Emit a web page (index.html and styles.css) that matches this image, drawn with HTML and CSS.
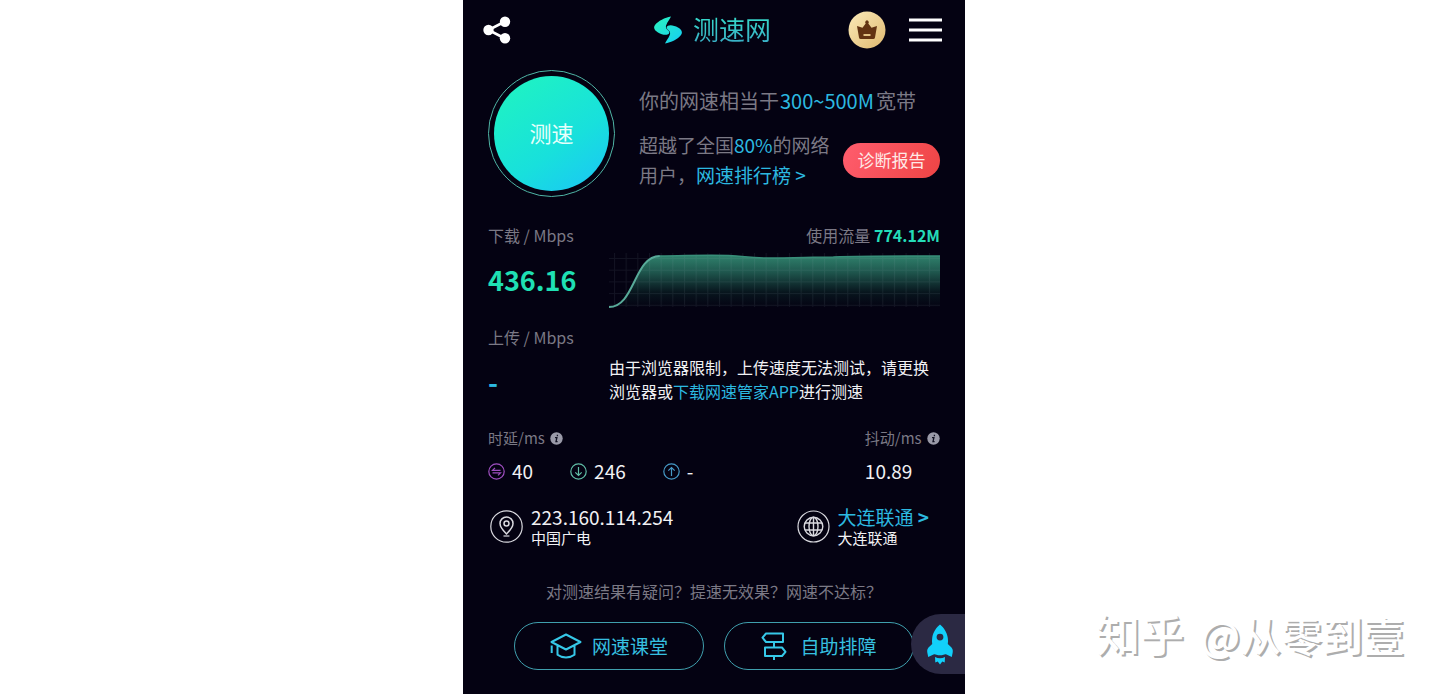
FILE: index.html
```html
<!DOCTYPE html>
<html lang="zh-CN">
<head>
<meta charset="utf-8">
<meta name="viewport" content="width=device-width, initial-scale=1">
<title>测速网</title>
<link rel="stylesheet" href="styles.css">
</head>
<body>
<main class="panel">
  <header class="topbar">
    <button class="icon-button" type="button" aria-label="分享">
      <svg width="28" height="28" viewBox="0 0 28 28" fill="#fff"><path d="M22 5.500 5.500 14 22 22.500" fill="none" stroke="#fff" stroke-width="2.600"/><circle cx="5.500" cy="14" r="5.200"/><circle cx="22" cy="5.700" r="5.200"/><circle cx="22" cy="22.300" r="5.200"/></svg>
    </button>
    <h1 class="brand">
      <svg width="28" height="28" viewBox="0 0 28 28" aria-hidden="true">
        <defs><linearGradient id="logo" x1="0" y1="0" x2="1" y2="1"><stop offset="0" stop-color="#2cf5bd"/><stop offset="1" stop-color="#14cdf5"/></linearGradient></defs>
        <path fill="url(#logo)" d="M17 .500C11 1.500 4 5 1 9C-1 12 .500 14.500 4 16.500C7.500 18.500 11.500 19.500 14 18.300C16 17.200 15.500 15.500 14 14.200C11.500 12 11.500 10.500 12.500 8.500C13.500 6 15.500 3.500 17 .500ZM11 27.500C17 26.500 24 23 27 19C29 16 27.500 13.500 24 11.500C20.500 9.500 16.500 8.500 14 9.700C12 10.800 12.500 12.500 14 13.800C16.500 16 16.500 17.500 15.500 19.500C14.500 22 12.500 24.500 11 27.500Z"/>
      </svg>
      <span class="brand-name">测速网</span>
    </h1>
    <div class="actions">
      <button class="icon-button" type="button" aria-label="会员">
        <svg width="38" height="38" viewBox="0 0 38 38">
          <defs><linearGradient id="gold" x1="0" y1="0" x2="1" y2="1"><stop offset="0" stop-color="#fbeab9"/><stop offset="1" stop-color="#dfb970"/></linearGradient></defs>
          <circle cx="19" cy="19" r="18.500" fill="url(#gold)"/>
          <path fill="#623313" d="M9 15l5.500 1.800 3.200-4.300a1.800 1.800 0 1 1 2.600 0l3.200 4.300L29 15l-2 11.500q-.300 1.500-1.700 1.500H12.700q-1.400 0-1.700-1.500Z"/>
          <path d="M15.500 24h7" stroke="#f0d291" stroke-width="1.800"/>
        </svg>
      </button>
      <button class="icon-button" type="button" aria-label="菜单">
        <svg width="33" height="24" viewBox="0 0 33 24"><path d="M0 2h33M0 12h33M0 22h33" stroke="#fff" stroke-width="3"/></svg>
      </button>
    </div>
  </header>

  <section class="hero">
    <button class="start" type="button"><span class="start-disc">测速</span></button>
    <div class="summary">
      <p class="summary-main">你的网速相当于<span class="cyan figure">300~500M</span>宽带</p>
      <div class="summary-row">
        <p class="summary-rank">超越了全国<span class="cyan">80%</span>的网络<br>用户，<a class="cyan" href="#rank">网速排行榜 &gt;</a></p>
        <button class="report" type="button">诊断报告</button>
      </div>
    </div>
  </section>

  <section class="measure download">
    <div class="reading">
      <h2 class="label">下载 / Mbps</h2>
      <p class="speed">436.16</p>
    </div>
    <div class="detail">
      <p class="label usage">使用流量 <strong>774.12M</strong></p>
      <svg class="chart" viewBox="0 0 332 55" preserveAspectRatio="none" aria-label="下载速度曲线">
        <defs>
          <linearGradient id="area" gradientUnits="userSpaceOnUse" x1="0" y1="2" x2="0" y2="55"><stop offset="0" stop-color="#30826d"/><stop offset=".3" stop-color="#205a50"/><stop offset=".7" stop-color="#08161e"/><stop offset="1" stop-color="#040212"/></linearGradient>
          <pattern id="grid" width="11.700" height="11.700" x="5" y="5" patternUnits="userSpaceOnUse"><path d="M.500 0v11.700M0 .500h11.700" stroke="#9aa6b4" stroke-opacity=".1"/></pattern>
        </defs>
        <path fill="url(#area)" d="M0 54C26 54 25 3 51 3C75 3 95 1.500 120 2.500C136 3 140 5 160 5C185 5 205 4 225 4C260 2.500 300 3 332 3V54Z"/>
        <rect width="332" height="54" fill="url(#grid)"/>
        <path fill="none" stroke="#58aa99" stroke-width="2" d="M0 54C26 54 25 3 51 3"/>
        <path fill="none" stroke="#388e79" stroke-width="1.500" d="M51 3C75 3 95 1.500 120 2.500C136 3 140 5 160 5C185 5 205 4 225 4C260 2.500 300 3 332 3"/>
      </svg>
    </div>
  </section>

  <section class="measure upload">
    <div class="reading">
      <h2 class="label">上传 / Mbps</h2>
      <p class="speed cyan">-</p>
    </div>
    <p class="detail notice">由于浏览器限制，上传速度无法测试，请更换浏览器或<a class="cyan" href="#app">下载网速管家APP</a>进行测速</p>
  </section>

  <section class="timing">
    <div>
      <h2 class="label small">时延/ms <svg class="info" width="13" height="13" viewBox="0 0 13 13"><circle cx="6.500" cy="6.500" r="6.200" fill="#9a9aa8"/><path d="M7.400 2.700v1.500M5 5.700h1.900l-.9 4h1.600" fill="none" stroke="#111122" stroke-width="1.300"/></svg></h2>
      <ul class="values">
        <li><svg width="17" height="17" viewBox="0 0 17 17" fill="none" stroke="#9f4fc0" stroke-width="1.200"><circle cx="8.500" cy="8.500" r="7.700"/><path d="M12.500 7.300h-8l2.500-2.500M4.500 9.800h8L10 12.300"/></svg>40</li>
        <li><svg width="17" height="17" viewBox="0 0 17 17" fill="none" stroke="#60bda6" stroke-width="1.200"><circle cx="8.500" cy="8.500" r="7.700"/><path d="M8.500 4v8.500M5.300 9.300l3.200 3.200 3.200-3.200"/></svg>246</li>
        <li><svg width="17" height="17" viewBox="0 0 17 17" fill="none" stroke="#4699c5" stroke-width="1.200"><circle cx="8.500" cy="8.500" r="7.700"/><path d="M8.500 13V4.500M5.300 7.700l3.200-3.200 3.200 3.200"/></svg>-</li>
      </ul>
    </div>
    <div>
      <h2 class="label small">抖动/ms <svg class="info" width="13" height="13" viewBox="0 0 13 13"><circle cx="6.500" cy="6.500" r="6.200" fill="#9a9aa8"/><path d="M7.400 2.700v1.500M5 5.700h1.900l-.9 4h1.600" fill="none" stroke="#111122" stroke-width="1.300"/></svg></h2>
      <p class="value">10.89</p>
    </div>
  </section>

  <section class="network">
    <div class="place">
      <svg width="33" height="33" viewBox="0 0 33 33" fill="none" stroke="#d9d9df" stroke-width="1.200"><circle cx="16.500" cy="16.500" r="15.700"/><path stroke-width="1.500" d="M16.500 24C13 20.500 10 17 10 13.500a6.500 6.500 0 0 1 13 0C23 17 20 20.500 16.500 24Z"/><circle cx="16.500" cy="13.500" r="2.500" stroke-width="1.500"/><path d="M13.500 26h6"/></svg>
      <div><p class="place-main">223.160.114.254</p><p class="place-sub">中国广电</p></div>
    </div>
    <div class="place isp">
      <svg width="33" height="33" viewBox="0 0 33 33" fill="none" stroke="#d9d9df" stroke-width="1.200"><circle cx="16.500" cy="16.500" r="15.500"/><g stroke-width="1.400"><circle cx="16.500" cy="16.500" r="9.300"/><ellipse cx="16.500" cy="16.500" rx="4.500" ry="9.300"/><path d="M16.500 7v19M8 13h17M8 20h17"/></g></svg>
      <div><p class="place-main"><a class="cyan" href="#isp">大连联通 <b>&gt;</b></a></p><p class="place-sub">大连联通</p></div>
    </div>
  </section>

  <footer class="help">
    <p class="label">对测速结果有疑问？提速无效果？网速不达标？</p>
    <div class="help-buttons">
      <button class="outline" type="button">
        <svg width="32" height="26" viewBox="0 0 32 26" fill="none" stroke="#36c8e8" stroke-width="2" stroke-linejoin="round"><path d="M16 1.500 1.500 9 16 16.500 30.500 9ZM7.500 12.500v9.300C12 25.300 20 25.300 24.500 21.800V12.500M1.700 12.500v7.500"/></svg>
        网速课堂
      </button>
      <button class="outline wide" type="button">
        <svg width="26" height="28" viewBox="0 0 26 28" fill="none" stroke="#36c8e8" stroke-width="2" stroke-linejoin="round"><path d="M22 1.500H5L1.500 5.700 5 10H22ZM4 15.500h17l3.500 4.300L21 24H4ZM13 10v5.500M13 24V28"/></svg>
        自助排障
      </button>
    </div>
    <button class="boost" type="button" aria-label="加速">
      <svg width="26" height="41" viewBox="0 0 26 41" fill="#12d0fa"><path fill-rule="evenodd" d="M13 .500C9.300 3.500 6 8 5.200 14c-.300 2-.300 4 0 6L1.500 23.500C.300 25 0 26.500.300 28.500l.900 4.500 5.300-2.500c1-.500 2-.200 3 .200 2.200.800 4.800.800 7 0 1-.400 2-.700 3-.200l5.300 2.500.900-4.500c.300-2 0-3.500-1.200-5L20.800 20c.300-2 .300-4 0-6C20 8 16.700 3.500 13 .500ZM13 9.700a3.400 3.400 0 1 1 0 6.800 3.400 3.400 0 0 1 0-6.800Z"/><path d="M8 33q5 2.500 10 0l-.3 5.500-2.400-1-2.300 3-2.300-3-2.400 1Z"/></svg>
    </button>
  </footer>
</main>
<p class="watermark"><span class="watermark-site">知乎</span> @从零到壹</p>
</body>
</html>
```

FILE: styles.css
```css
* { box-sizing: border-box; }

body {
  display: flex;
  justify-content: center;
  margin: 0;
  padding-right: 12px;
  background: #fff;
  font-family: "Noto Sans CJK SC", sans-serif;
  font-size: 16px;
  line-height: 24px;
}

h1, h2, p, ul { margin: 0; padding: 0; font-weight: 400; }
ul { list-style: none; }
svg { display: block; flex: none; }
a { text-decoration: none; }
button { padding: 0; border: 0; background: none; font: inherit; color: inherit; cursor: pointer; }

.panel {
  width: 100%;
  max-width: 502px;
  min-height: 100vh;
  padding: 0 25px 24px;
  background: #040212;
  color: #f1f1f4;
}

.cyan { color: #2cb9e0; }

.label {
  color: #7b7985;
  font-size: 16px;
  line-height: 24px;
}
.small { font-size: 15px; }

.topbar {
  display: grid;
  grid-template-columns: 1fr auto 1fr;
  align-items: center;
  height: 60px;
  margin: 0 -2px 0 -5px;
}
.icon-button { justify-self: start; }
.brand { display: flex; align-items: center; gap: 11px; }
.brand-name {
  padding-bottom: 2px;
  background: linear-gradient(#35e4cc, #3aa5c4);
  background-clip: text;
  color: transparent;
  font-size: 26px;
  line-height: 36px;
}
.actions { display: flex; align-items: center; justify-content: flex-end; gap: 23px; }

.hero { display: flex; gap: 24px; padding-top: 10px; }
.start {
  flex: none;
  width: 127px;
  height: 127px;
  padding: 5px;
  border: 1px solid #4fb5a5;
  border-radius: 50%;
}
.start-disc {
  display: flex;
  align-items: center;
  justify-content: center;
  height: 100%;
  padding-bottom: 3px;
  border-radius: 50%;
  background: linear-gradient(145deg, #1ef0c6 15%, #18e0dc 60%, #1bc4f8);
  color: #e6fffb;
  font-size: 22px;
}
.summary { flex: 1; padding-top: 16px; color: #7b7985; }
.summary-main { font-size: 20px; line-height: 30px; }
.figure { padding: 0 2px 0 1px; }
.summary-row {
  display: flex;
  align-items: center;
  justify-content: space-between;
  padding-top: 14px;
}
.summary-rank { font-size: 19px; line-height: 30px; white-space: nowrap; }
.report {
  width: 97px;
  height: 35px;
  border-radius: 18px;
  background: linear-gradient(120deg, #ff5d6e, #ee4444);
  color: #ffe9e6;
  font-size: 17px;
}

.measure { display: grid; grid-template-columns: 121px 1fr; }
.download { padding-top: 26px; }
.upload { padding-top: 17px; }
.speed {
  padding-top: 12px;
  color: #1fe0b4;
  font-size: 27px;
  font-weight: 700;
  line-height: 42px;
}
.speed.cyan { color: #2cb9e0; }
.usage { text-align: right; }
.usage strong { color: #24dcb8; }
.chart { width: 100%; height: 55px; margin-top: 6px; }
.notice { padding-top: 30px; }

.timing { display: flex; justify-content: space-between; padding-top: 23px; }
.info { display: inline-block; margin-left: 2px; vertical-align: -1px; }
.values { display: flex; gap: 37px; }
.values li { display: flex; align-items: center; gap: 7px; }
.values, .value { padding-top: 9px; font-size: 19px; line-height: 24px; }

.network { display: flex; justify-content: space-between; padding-top: 22px; }
.place { display: flex; align-items: center; gap: 8px; padding-left: 2px; }
.isp { padding-right: 11px; }
.place-main { font-size: 19px; line-height: 24px; }
.place-sub { font-size: 15px; line-height: 18px; }

.help { position: relative; padding-top: 32px; text-align: center; }
.help-buttons {
  display: grid;
  grid-template-columns: 1fr 1fr;
  gap: 20px;
  margin: 19px 26px 0;
}
.outline {
  display: flex;
  align-items: center;
  justify-content: center;
  gap: 10px;
  height: 48px;
  border: 1px solid #3f9fad;
  border-radius: 24px;
  color: #36c0e0;
  font-size: 19px;
}
.wide { gap: 13px; }
.boost {
  position: absolute;
  right: -25px;
  bottom: -4px;
  display: flex;
  align-items: center;
  width: 54px;
  height: 60px;
  padding-left: 16px;
  border-radius: 30px 0 0 30px;
  background: #2b2943;
}

.watermark {
  position: absolute;
  right: 36px;
  bottom: 30px;
  color: #fff;
  font-size: 41px;
  font-weight: 500;
  line-height: 60px;
  text-shadow: 2px 2px 0 #adadad;
}
.watermark-site { margin-right: 7px; font-size: 44px; }
```
